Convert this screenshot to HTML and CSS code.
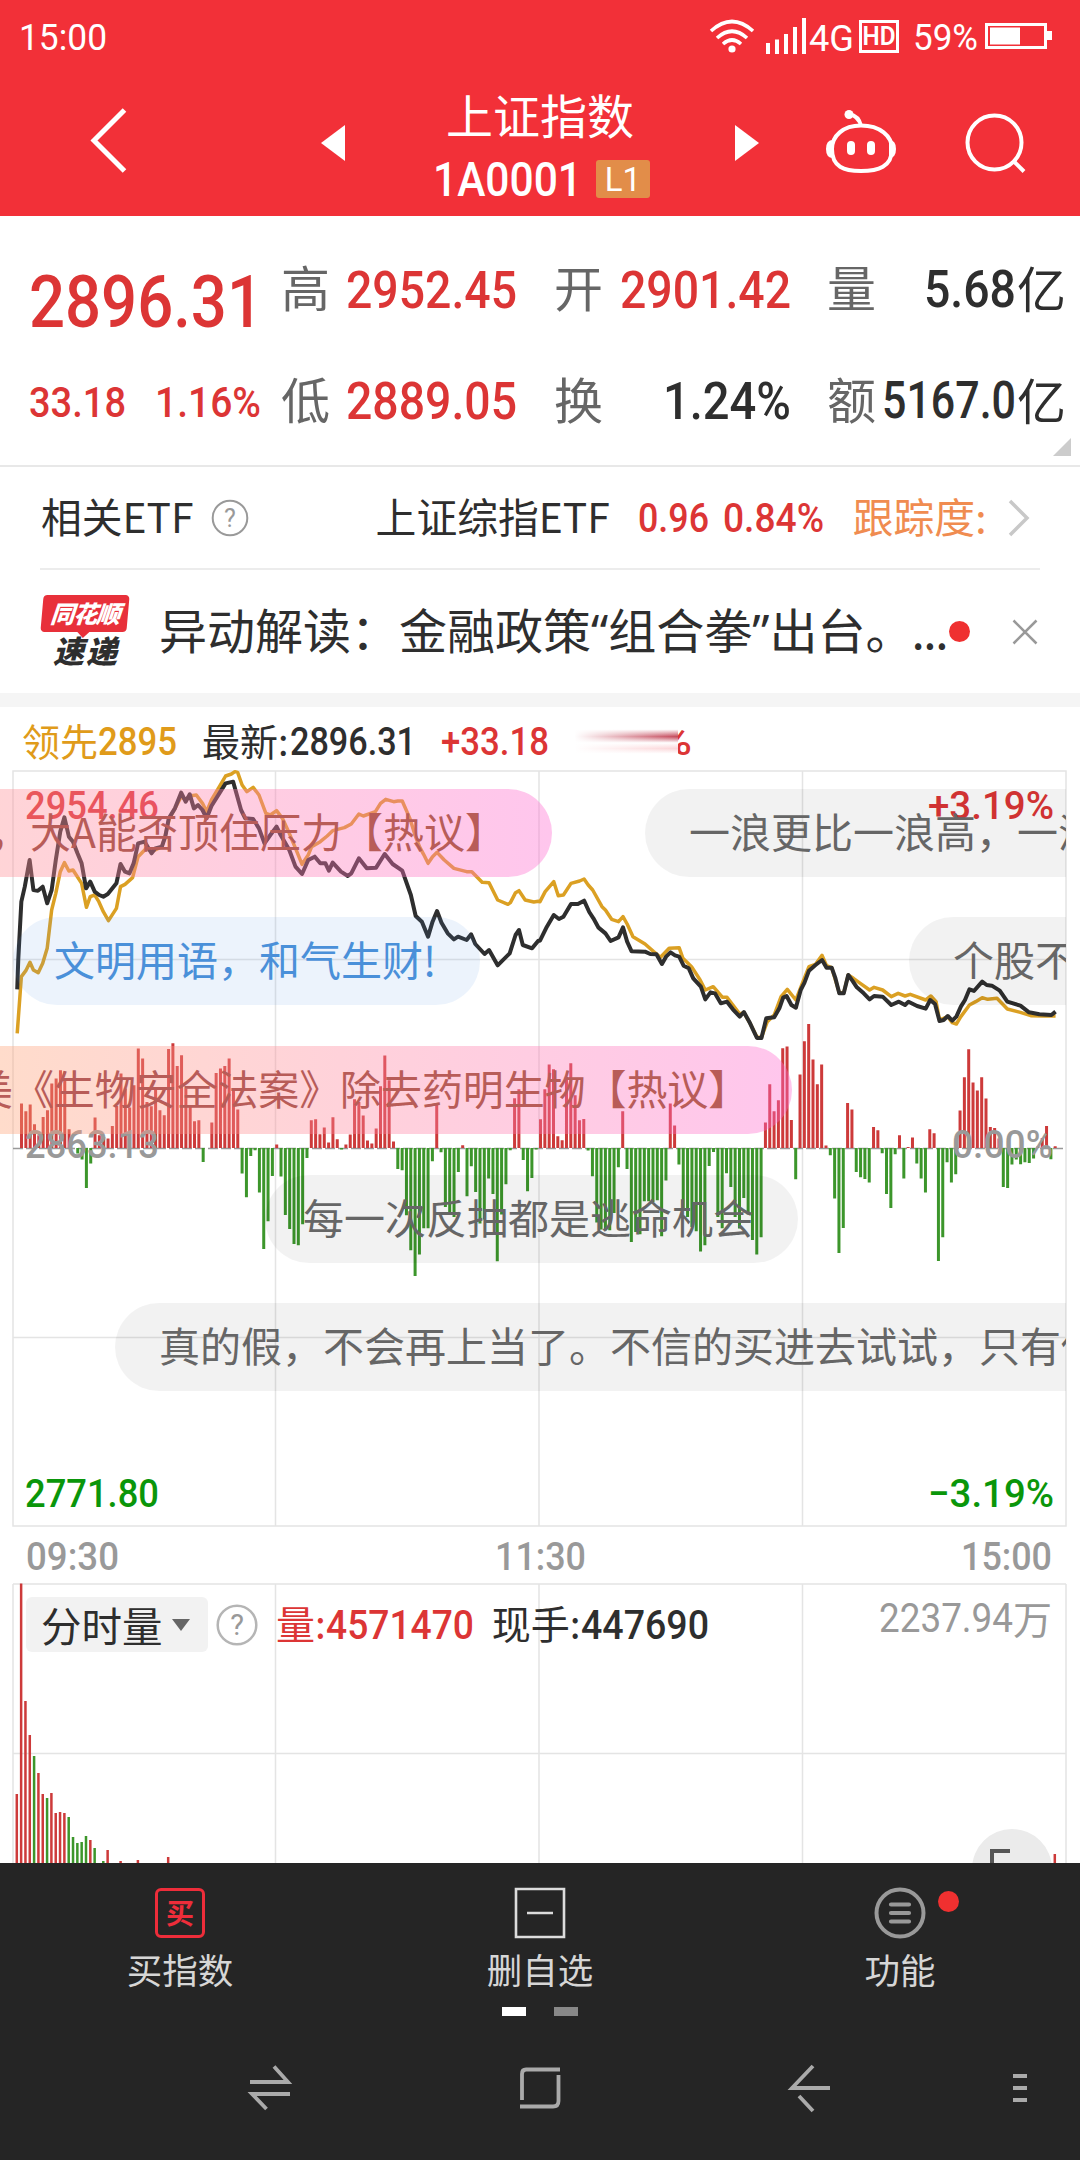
FILE: index.html
```html
<!DOCTYPE html>
<html lang="zh-CN">
<head>
<meta charset="utf-8">
<title>上证指数 1A0001</title>
<link rel="stylesheet" href="styles.css">
</head>
<body>
<header class="top">
  <div class="status">
    <svg class="n reg" width="88" height="27" style="font-size:37px"><text y="27" textLength="88" lengthAdjust="spacingAndGlyphs">15:00</text></svg>
    <svg class="status-icons" width="360" height="40" viewBox="706 14 360 40">
      <g fill="none" stroke="#fff" stroke-width="3.6">
        <path d="M711 31Q732 12 753 31M717 38Q732 24.500 747 38M723 44Q732 36 741 44"/>
      </g>
      <circle cx="732" cy="49" r="3.600" fill="#fff"/>
      <path fill="#fff" d="M766 43h4v11h-4zM775 39.500h4v14.500h-4zM784 34h4v20h-4zM793 27h4v27h-4zM802 18h4v36h-4z"/>
      <text x="809" y="51" font-size="37" font-weight="400" textLength="45" lengthAdjust="spacingAndGlyphs">4G</text>
      <rect x="860.500" y="21.500" width="37" height="30" fill="none" stroke="#fff" stroke-width="3"/>
      <text x="862.500" y="45" font-size="25" font-weight="600" textLength="33" lengthAdjust="spacingAndGlyphs">HD</text>
      <text x="913" y="50" font-size="37" textLength="65" lengthAdjust="spacingAndGlyphs">59%</text>
      <rect x="986.500" y="24.500" width="59" height="23" fill="none" stroke="#fff" stroke-width="3"/>
      <path fill="#fff" d="M990 27.500h30v17h-30zM1047 31h5v9h-5z"/>
    </svg>
  </div>
  <nav class="titlebar">
    <svg width="60" height="80" viewBox="80 100 60 80"><path d="M124.500 112L94 142.500L124.500 173" fill="none" stroke="#fff" stroke-width="5"/></svg>
    <svg width="40" height="50" viewBox="315 120 40 50"><path d="M345 126v36l-24-18z" fill="#fff"/></svg>
    <div class="title">
      <h1>上证指数</h1>
      <div class="code">
        <svg class="n" width="149" height="34" style="font-size:48.500px"><text y="34" textLength="149" lengthAdjust="spacingAndGlyphs">1A0001</text></svg>
        <span class="level">L1</span>
      </div>
    </div>
    <svg width="40" height="50" viewBox="728 120 40 50"><path d="M735 126v36l24-18z" fill="#fff"/></svg>
    <svg width="80" height="80" viewBox="821 100 80 80">
      <path d="M849 115Q859 117 861 127" fill="none" stroke="#fff" stroke-width="4"/>
      <circle cx="849" cy="115.500" r="4.500" fill="#fff"/>
      <path d="M861 126.500C880 126.500 892 137 892 150C892 168 878 172 861 172S832 168 832 150C832 137 843 126.500 861 126.500Z" fill="none" stroke="#fff" stroke-width="4"/>
      <path d="M833 141q-7 0-7 9t7 9zM889 141q7 0 7 9t-7 9z" fill="#fff"/>
      <rect x="847" y="142" width="8" height="14" rx="4" fill="#fff"/><rect x="867" y="142" width="8" height="14" rx="4" fill="#fff"/>
    </svg>
    <svg width="70" height="80" viewBox="960 100 70 80"><g fill="none" stroke="#fff" stroke-width="4"><circle cx="994.500" cy="142.500" r="27"/><path d="M1014 161.500L1024 171.500"/></g></svg>
  </nav>
</header>

<section class="quote">
  <div class="quote-row first">
    <svg class="n up big" width="234" height="52"><text y="52" textLength="234" lengthAdjust="spacingAndGlyphs">2896.31</text></svg>
    <span class="k">高</span><svg class="n up f52" width="171" height="37"><text y="37" textLength="171" lengthAdjust="spacingAndGlyphs">2952.45</text></svg>
    <span class="k">开</span><svg class="n up f52" width="171" height="37"><text y="37" textLength="171" lengthAdjust="spacingAndGlyphs">2901.42</text></svg>
    <span class="k">量</span><span class="v"><svg class="n f52" width="92" height="37"><text y="37" textLength="92" lengthAdjust="spacingAndGlyphs">5.68</text></svg>亿</span>
  </div>
  <div class="quote-row">
    <span class="chg"><svg class="n up f43" width="97" height="31"><text y="31" textLength="97" lengthAdjust="spacingAndGlyphs">33.18</text></svg><svg class="n up f43" width="106" height="31"><text y="31" textLength="106" lengthAdjust="spacingAndGlyphs">1.16%</text></svg></span>
    <span class="k">低</span><svg class="n up f52" width="171" height="37"><text y="37" textLength="171" lengthAdjust="spacingAndGlyphs">2889.05</text></svg>
    <span class="k">换</span><svg class="n f52 right" width="128" height="37"><text y="37" textLength="128" lengthAdjust="spacingAndGlyphs">1.24%</text></svg>
    <span class="k">额</span><span class="v"><svg class="n f52" width="134" height="37"><text y="37" textLength="134" lengthAdjust="spacingAndGlyphs">5167.0</text></svg>亿</span>
  </div>
  <i class="corner"></i>
</section>

<section class="etf">
  <span>相关ETF</span>
  <svg class="help" width="38" height="38"><circle cx="19" cy="19" r="17.300" fill="none" stroke="#999" stroke-width="2"/><text x="19" y="28" font-size="25" text-anchor="middle">?</text></svg>
  <span class="etf-name">上证综指ETF</span>
  <svg class="n up f41" width="71" height="29" style="margin-left:28px"><text y="29" textLength="71" lengthAdjust="spacingAndGlyphs">0.96</text></svg>
  <svg class="n up f41" width="101" height="29" style="margin-left:14px"><text y="29" textLength="101" lengthAdjust="spacingAndGlyphs">0.84%</text></svg>
  <span class="track">跟踪度:</span>
  <svg class="go" width="24" height="40"><path d="M2 3L19 20L2 37" fill="none" stroke="#c8c8c8" stroke-width="3.500"/></svg>
</section>

<section class="news">
  <div class="logo"><b class="logo-a">同花顺</b><b class="logo-b">速递</b></div>
  <p><span>异动解读：金融政策<q>“</q>组合拳<q>”</q>出台。</span><span class="dots">...</span></p>
  <i class="dot"></i>
  <svg class="close" width="26" height="26"><path d="M1.500 1.500L24.500 24.500M24.500 1.500L1.500 24.500" stroke="#999" stroke-width="2.500"/></svg>
</section>

<section class="legend">
  <span class="lead">领先</span><svg class="n lead f38" width="79" height="27"><text y="27" textLength="79" lengthAdjust="spacingAndGlyphs">2895</text></svg>
  <span class="latest">最新:</span><svg class="n f38" width="126" height="27"><text y="27" textLength="126" lengthAdjust="spacingAndGlyphs">2896.31</text></svg>
  <svg class="n up f38" width="108" height="27" style="margin-left:25px"><text y="27" textLength="108" lengthAdjust="spacingAndGlyphs">+33.18</text></svg>
  <span class="smear"><svg class="n up f38" width="33" height="27"><text y="27" textLength="33" lengthAdjust="spacingAndGlyphs">%</text></svg></span>
</section>

<section class="price">
  <svg class="chart" width="1080" height="813" viewBox="0 770 1080 813">
    <path d="M13 771H1066V1526H13ZM275.500 771V1526M539 771V1526M802.500 771V1526M13 959.500H1066M13 1337.500H1066" stroke="#e4e4e4" stroke-width="1.500" fill="none"/>
    <path d="M13 1148.500H1064" stroke="#999" stroke-width="1.500" stroke-dasharray="10 3"/>
    <path id="up" stroke="#cd3a3a" stroke-width="3"/>
    <path id="down" stroke="#3c962b" stroke-width="3"/>
    <g class="lab">
      <text x="25" y="819" textLength="134" lengthAdjust="spacingAndGlyphs" class="up">2954.46</text>
      <text x="928" y="819" textLength="126" lengthAdjust="spacingAndGlyphs" class="up">+3.19%</text>
      <text x="25" y="1158" textLength="134" lengthAdjust="spacingAndGlyphs" class="mute">2863.13</text>
      <text x="952" y="1158" textLength="101" lengthAdjust="spacingAndGlyphs" class="mute">0.00%</text>
      <text x="25" y="1507" textLength="134" lengthAdjust="spacingAndGlyphs" class="down">2771.80</text>
      <text x="928" y="1507" textLength="126" lengthAdjust="spacingAndGlyphs" class="down">−3.19%</text>
      <text x="26" y="1569.500" textLength="93" lengthAdjust="spacingAndGlyphs" class="mute">09:30</text>
      <text x="495" y="1569.500" textLength="91" lengthAdjust="spacingAndGlyphs" class="mute">11:30</text>
      <text x="961" y="1569.500" textLength="91" lengthAdjust="spacingAndGlyphs" class="mute">15:00</text>
    </g>
    <g transform="translate(0 700) scale(.34439 .33333)" fill="none" stroke-linejoin="round">
      <polyline id="avg" stroke="#dba023" stroke-width="3.500" vector-effect="non-scaling-stroke"/>
      <polyline id="idx" stroke="#2e2e2e" stroke-width="4" vector-effect="non-scaling-stroke"/>
    </g>
  </svg>
  <div class="danmaku">
    <span class="pill hot p1">，大A能否顶住压力【热议】</span>
    <span class="pill p2">一浪更比一浪高，一浪</span>
    <span class="pill blue p3">文明用语，和气生财!</span>
    <span class="pill p4">个股不看</span>
    <span class="pill hot p5">美《生物安全法案》除去药明生物【热议】</span>
    <span class="pill p6">每一次反抽都是逃命机会</span>
    <span class="pill p7">真的假，不会再上当了。不信的买进去试试，只有你</span>
  </div>
</section>

<section class="volume">
  <svg class="chart" width="1080" height="280" viewBox="0 1583 1080 280">
    <path d="M13 1584H1066M13 1584V1863M1066 1584V1863M275.500 1584V1863M539 1584V1863M802.500 1584V1863M13 1753.500H1066" stroke="#e4e4e4" stroke-width="1.500" fill="none"/>
    <path id="vup" stroke="#cd3a3a" stroke-width="2.500"/>
    <path id="vdown" stroke="#3c962b" stroke-width="2.500"/>
  </svg>
  <div class="vol-head">
    <span class="chip">分时量<i></i></span>
    <svg class="help" width="42" height="42" style="margin-left:8px"><circle cx="21" cy="21" r="19.300" fill="none" stroke="#b5b5b5" stroke-width="2.500"/><text x="21" y="31" font-size="29" text-anchor="middle">?</text></svg>
    <span class="up cjk">量:</span><svg class="n up f40" width="148" height="29"><text y="29" textLength="148" lengthAdjust="spacingAndGlyphs">4571470</text></svg>
    <span class="cjk">现手:</span><svg class="n f40" width="128" height="29"><text y="29" textLength="128" lengthAdjust="spacingAndGlyphs">447690</text></svg>
    <span class="max"><svg class="n reg f40" width="134" height="29"><text y="29" textLength="134" lengthAdjust="spacingAndGlyphs">2237.94</text></svg>万</span>
  </div>
  <div class="float"><svg width="80" height="34"><path d="M20 34V22H38" fill="none" stroke="#555" stroke-width="4"/></svg></div>
</section>

<footer>
  <div class="tabs">
    <div class="tab"><span class="buy">买</span>买指数</div>
    <div class="tab"><svg width="50" height="50"><path d="M1 1H49V49H1ZM12 25H38" fill="none" stroke="#dcdcdc" stroke-width="2.600"/></svg>删自选</div>
    <div class="tab"><svg width="50" height="50"><circle cx="25" cy="25" r="23.500" fill="none" stroke="#999" stroke-width="4"/><path d="M16 16.500H34M16 25H34M16 33.500H34" stroke="#999" stroke-width="4.200" stroke-linecap="round"/><circle cx="73.500" cy="13.500" r="10.500" fill="#f03030"/></svg>功能</div>
  </div>
  <div class="pager"><i class="on"></i><i></i></div>
  <svg class="sysnav" width="1080" height="60" viewBox="0 2058 1080 60">
    <g fill="none" stroke="#aaa" stroke-width="3.800">
      <path d="M250 2082H288L274 2066.500M290 2094H252L266.500 2109"/>
      <path d="M560 2069.500H526Q522 2069.500 522 2074V2100M520 2106.500H553Q558.500 2106.500 558.500 2101V2075"/>
      <path d="M830 2088H792L813 2066M799 2096L813 2111"/>
      <path d="M1013 2076H1027M1013 2088H1027M1013 2100H1027"/>
    </g>
  </svg>
</footer>
<script src="chart.js"></script>
</body>
</html>
```
FILE: styles.css
```css
* { box-sizing: border-box; }
body {
  margin: 0; width: 1080px; height: 2160px; overflow: hidden;
  display: flex; flex-direction: column;
  background: #fff; color: #2e2e2e;
  font-family: Roboto, "Noto Sans CJK SC", sans-serif;
}
svg { display: block; flex: none; overflow: visible; }
i { font-style: normal; display: block; flex: none; }
.n { font-family: Roboto, sans-serif; font-weight: 500; fill: #2e2e2e; }
.n.reg { font-weight: 400; }
.f38 { font-size: 38px; }
.f40 { font-size: 40px; }
.f41 { font-size: 41px; }
.f43 { font-size: 43px; }
.f52 { font-size: 52px; }
.up, .n.up { fill: #dc3535; color: #dc3535; }

.top { height: 216px; background: #f23038; color: #fff; }
.top .n, .top text { fill: #fff; }
.status { height: 54px; display: flex; justify-content: space-between; padding: 0 14px 0 19px; align-items: flex-end; }
.status .n { margin-bottom: 4px; }
.titlebar { height: 162px; display: grid; grid-template-columns: 80px 60px 175px 40px 25px 320px 28px 40px 53px 80px 59px 70px; align-items: center; padding-top: 10px; }
.titlebar > :nth-child(1) { grid-column: 2; margin-top: -4px; }
.titlebar > :nth-child(2) { grid-column: 4; margin-top: 7px; }
.titlebar > :nth-child(3) { grid-column: 6; }
.titlebar > :nth-child(4) { grid-column: 8; margin-top: 7px; }
.titlebar > :nth-child(5) { grid-column: 10; margin-top: -2px; }
.titlebar > :nth-child(6) { grid-column: 12; margin-top: -1px; }
.title { display: flex; flex-direction: column; align-items: center; padding-top: 11px; }
.title h1 { margin: 0; font: 400 47px/62px "Noto Sans CJK SC", sans-serif; }
.code { display: flex; align-items: center; gap: 14px; height: 60px; margin: 4px 0 0 3px; }
.level { width: 54px; height: 38px; border-radius: 3px; background: #e28d49; font-size: 33px; line-height: 39px; text-align: center; }

.quote { position: relative; height: 251px; border-bottom: 2px solid #e8e8e8; padding: 16px 14px 0 29px; }
.quote-row { display: grid; grid-template-columns: 252px 65px 208px 66px 207px 52px 1fr; align-items: center; height: 112px; }
.k { font: 400 49px/70px "Noto Sans CJK SC", sans-serif; color: #666; }
.quote-row .k { margin-top: -4px; }
.v { display: flex; align-items: center; justify-content: flex-end; font: 400 49px/70px "Noto Sans CJK SC", sans-serif; margin: -2px 0 0; white-space: nowrap; }
.v .n { margin-right: 1px; }
.right { margin-left: 43px; }
.first .n { margin-top: 3px; }
.first .big { margin-top: 26px; font-size: 73px; }
.chg { display: flex; gap: 29px; margin-top: 2px; }
.corner { position: absolute; right: 9px; bottom: 9px; border-left: 18px solid transparent; border-bottom: 18px solid #ccc; }

.etf { height: 103px; margin: 0 40px; border-bottom: 2px solid #ececec; display: flex; align-items: center; font: 400 40.800px/60px "Noto Sans CJK SC", sans-serif; white-space: nowrap; }
.etf span { margin-top: -4px; }
.etf span:first-child { padding-left: 1px; }
.help { margin-left: 17px; }
.help text { fill: #999; font-family: Roboto, sans-serif; }
.etf .etf-name { margin-left: 127px; }
.etf .track { color: #f08c50; margin-left: 29px; }
.go { margin-left: auto; margin-right: 8px; }

.news { height: 137px; border-bottom: 14px solid #f5f5f5; display: flex; align-items: center; padding: 0 42px 0 42px; }
.logo { width: 88px; text-align: center; font-family: "Noto Sans CJK SC", sans-serif; font-style: italic; }
.logo b { display: block; font-weight: 900; }
.logo-a { position: relative; width: 86px; height: 37px; line-height: 35px; font-size: 24px; letter-spacing: -1px; color: #fff; background: #e8303a; border-radius: 4px; transform: skewX(-5deg); }
.logo-a::after { content: ""; position: absolute; left: 36px; top: 36px; border: 7px solid transparent; border-top-color: #e8303a; border-bottom: 0; }
.logo-b { font-size: 31px; line-height: 38px; letter-spacing: 2px; margin: -1px 0 0; }
.news p { margin: -5px 0 0 29px; width: 784px; font: 400 48px/70px "Noto Sans CJK SC", sans-serif; white-space: nowrap; display: flex; }
q { quotes: none; font-family: "Noto Sans", sans-serif; }
.dots { margin-left: -2px; letter-spacing: -1.500px; }
.dot { width: 21px; height: 21px; border-radius: 50%; background: #ef3030; margin-left: 6px; }
.close { margin-left: auto; }

.legend { height: 63px; display: flex; align-items: center; padding: 5px 0 0 22px; font: 400 38px/56px "Noto Sans CJK SC", sans-serif; white-space: nowrap; }
.lead { color: #e09b1a; }
.n.lead { fill: #e09b1a; }
.latest { margin-left: 25px; margin-right: 1px; }
.legend span:not(.smear) { margin-top: -3px; }
.smear { position: relative; width: 124px; height: 27px; margin-left: 20px; padding-left: 90px; overflow: hidden; }
.smear::before { content: ""; position: absolute; left: 0; top: 0; width: 109px; height: 27px; background: linear-gradient(90deg, #fff 5%, transparent), linear-gradient(#fff 5%, #c4485a 32%, #fff 55%, #fbd5d8 76%, #fff 95%); }

.price { position: relative; height: 813px; }
.lab text { font-size: 39.500px; font-weight: 500; }
.lab .mute { fill: #999; }
.down { fill: #0a960a; }
.danmaku { position: absolute; left: 0; top: 0; width: 1066px; height: 756px; overflow: hidden; }
.pill { position: absolute; height: 88px; padding: 0 44px; border-radius: 44px; background: rgba(0,0,0,.05); color: #666; font: 400 41px/82px "Noto Sans CJK SC", sans-serif; white-space: nowrap; }
.hot { color: #b85c58; background: linear-gradient(90deg, rgba(255,168,110,.38), rgba(255,132,165,.38) 55%, rgba(255,105,208,.38)); }
.blue { color: #4a90d9; background: rgba(80,150,225,.11); }
.p1 { left: -355px; top: 19px; width: 907px; padding-left: 344px; }
.p2 { left: 645px; top: 19px; }
.p3 { left: 13px; top: 147px; width: 467px; padding-left: 41px; }
.p4 { left: 909px; top: 147px; }
.p5 { left: -71px; top: 276px; width: 863px; padding-left: 43px; letter-spacing: -.1px; }
.p6 { left: 265px; top: 405px; width: 533px; padding-left: 38px; }
.p7 { left: 115px; top: 533px; }

.volume { position: relative; height: 280px; overflow: hidden; }
.vol-head { position: absolute; left: 26px; top: 14px; right: 28px; height: 55px; display: flex; align-items: center; font: 400 39px/55px "Noto Sans CJK SC", sans-serif; white-space: nowrap; }
.cjk { margin: -4px 0 0 18px; }
.chip { width: 182px; height: 55px; border-radius: 6px; background: #f2f2f2; padding-left: 15px; font-size: 40.500px; line-height: 50px; display: flex; align-items: center; gap: 9px; }
.chip i { border: 9px solid transparent; border-top: 12px solid #666; border-bottom: 0; }
.max { margin-left: auto; display: flex; align-items: center; color: #999; margin-top: -15px; }
.max .n { fill: #999; }
.float { position: absolute; left: 972px; top: 246px; width: 80px; height: 80px; border-radius: 50%; background: #ebebeb; }

footer { height: 297px; background: #252525; display: flex; flex-direction: column; }
.tabs { display: grid; grid-template-columns: repeat(3, 1fr); padding-top: 25px; height: 144px; }
.tab { display: flex; flex-direction: column; align-items: center; gap: 5px; color: #d6d6d6; font: 400 35.500px/52px "Noto Sans CJK SC", sans-serif; }
.buy { width: 50px; height: 50px; border: 3px solid #ee2d3a; border-radius: 6px; color: #ee2d3a; font-size: 28px; font-weight: 700; line-height: 42px; text-align: center; }
.pager { display: flex; justify-content: center; gap: 28px; height: 9px; }
.pager i { width: 24px; height: 9px; background: #888; }
.pager .on { background: #fff; }
.sysnav { margin-top: 42px; }
```
FILE: chart.js
```js
// Per-minute momentum bars, in thirds of a pixel; positive is above the zero axis.
const momentum = [0,
134,111,131,72,39,94,114,194,209,234,204,57,0,-16,-34,-119,-46,92,39,34,
29,67,127,224,179,122,189,299,269,139,126,179,114,99,298,315,247,279,179,124,
81,84,-41,0,77,226,239,247,269,179,116,-76,-147,-23,-6,-133,-302,-219,-83,11,
-85,-200,-242,-287,-291,-228,-29,84,87,42,62,17,93,27,-4,11,41,147,139,98,
23,14,59,186,278,204,20,-62,-66,-201,-306,-383,-319,-240,-240,-39,134,-12,-176,-191,
-206,-71,9,-144,-54,-131,-226,-214,-91,-137,-339,-199,-108,-6,150,177,-35,-129,-89,-4,
87,177,251,237,36,24,214,255,159,84,88,-7,-84,-223,-244,-246,-246,-194,-57,111,
-62,-281,-251,-258,-159,-159,-161,-156,-264,-97,134,68,-49,-182,-206,-236,-249,-310,-291,-53,
-11,-206,-240,-75,-116,-206,-241,-149,-199,-275,-319,-267,77,192,111,144,300,305,85,-93,
221,321,373,266,192,251,8,-21,-151,-314,-239,136,116,-71,-87,-92,-103,64,54,-15,
-137,-179,-18,39,-91,4,32,-46,-91,-133,57,45,-338,-267,-42,-103,-78,113,213,297,
197,173,213,149,64,61,29,-116,-119,-49,-34,-48,-42,-44,-31,6,31,67,-33,6];
const step = 4.325, x0 = 17.2;
let up = '', down = '';
momentum.forEach((v, i) => {
  if (!v) return;
  const seg = `M${(x0 + i * step).toFixed(2)} 1148V${(1148.3 - v / 3).toFixed(1)}`;
  if (v > 0) up += seg; else down += seg;
});
document.getElementById('up').setAttribute('d', up);
document.getElementById('down').setAttribute('d', down);

// Intraday curves: the second half is offset by one half-width (1568 units).
const join = (a, b) => a + ' ' + b.split(' ').map(p => {
  const [x, y] = p.split(',');
  return (+x + 1568) + ',' + y;
}).join(' ');
document.getElementById('idx').setAttribute('points', join(
'50,868 53,780 62,605 72,560 86,480 97,570 110,572 124,560 137,610 150,570 162,480 175,395 187,352 200,410 212,425 225,460 237,490 250,565 262,545 275,575 288,585 300,590 313,582 338,550 350,492 363,515 376,520 388,490 401,430 420,425 440,460 451,445 470,440 480,410 490,355 508,325 526,278 539,305 551,283 563,325 575,315 588,330 600,355 614,318 640,275 655,250 677,245 700,330 712,355 735,357 752,385 768,430 785,405 803,380 815,405 840,450 858,500 877,522 895,480 914,470 930,490 945,490 955,512 966,488 990,515 1010,528 1020,520 1042,475 1065,505 1092,503 1117,462 1140,492 1168,512 1193,585 1207,648 1225,665 1243,710 1256,665 1269,633 1282,668 1300,700 1318,718 1330,710 1355,720 1368,703 1380,732 1407,762 1420,750 1445,796 1480,760 1497,705 1507,690 1518,735 1545,745 1563,722',
'0,722 20,680 40,645 55,657 68,650 90,612 110,612 128,602 143,636 155,655 170,683 190,700 205,723 228,712 241,682 253,725 266,754 305,755 320,762 338,763 354,792 366,770 379,757 392,766 404,770 417,797 432,805 445,835 467,860 480,898 495,877 508,880 525,910 543,905 560,928 580,950 592,936 610,970 630,1014 643,1014 657,955 680,952 695,925 706,893 716,888 730,915 743,923 757,870 768,848 781,812 800,795 819,780 832,803 847,803 857,832 869,880 882,880 895,825 907,842 920,862 940,880 957,898 970,888 995,890 1020,915 1042,905 1060,915 1070,905 1095,918 1120,926 1133,900 1147,912 1160,963 1172,960 1184,948 1197,962 1209,950 1222,920 1234,900 1247,868 1260,873 1284,845 1297,855 1312,857 1335,872 1357,905 1395,917 1420,937 1450,943 1485,945 1497,935'));
document.getElementById('avg').setAttribute('points', join(
'50,1000 62,830 75,812 87,787 97,810 111,818 124,790 137,745 150,630 162,580 175,515 187,488 200,513 212,510 237,550 251,622 262,590 275,585 287,605 300,635 315,662 338,625 350,560 363,553 385,533 401,470 425,445 440,455 470,440 480,405 492,355 508,325 526,290 540,300 551,288 570,285 588,310 600,335 614,300 640,255 655,228 672,222 682,215 690,217 703,255 717,275 735,262 752,285 772,340 785,345 803,332 820,355 840,400 862,455 877,493 895,465 905,440 930,425 950,408 966,392 1000,383 1020,372 1042,342 1055,348 1090,335 1105,310 1120,298 1143,305 1155,303 1168,303 1190,355 1205,405 1218,440 1230,463 1243,490 1256,470 1269,457 1290,480 1318,505 1355,515 1370,515 1400,547 1420,548 1445,600 1475,613 1482,608 1497,578 1507,572 1525,600 1550,606 1563,604',
'0,605 15,575 40,545 53,587 68,585 90,550 115,543 128,537 140,555 153,570 180,620 190,630 208,658 228,665 241,650 253,672 270,710 305,732 330,755 350,772 375,745 404,743 415,775 440,800 465,840 480,870 503,860 530,892 543,892 580,942 592,938 610,970 630,1012 643,1012 660,965 680,945 700,890 718,868 743,900 760,855 781,800 800,793 819,766 832,797 847,803 869,878 882,878 895,825 910,835 930,850 957,870 970,862 995,870 1020,890 1040,880 1060,888 1075,883 1120,900 1135,888 1150,905 1160,960 1184,950 1197,968 1209,972 1222,950 1247,915 1265,905 1284,893 1300,898 1327,895 1357,927 1395,937 1425,947 1460,948 1497,948'));

// Volume bars: [minute, top in px, rising?]
const volume = [[0,1794,1],[1,1583.5,1],[2,1701,1],[3,1735,1],[4,1756,0],[5,1773,1],[6,1794,1],[7,1798,0],[8,1793,1],[9,1813,1],[10,1812,1],[11,1813,1],[12,1817,0],[13,1837,0],[14,1843,0],[15,1842,0],[16,1836,0],[17,1840,1],[18,1848,0],[20,1861,0],[21,1850,1],[24,1861,1],[28,1860,1],[35,1857,1],[240,1854,1]];
let vu = '', vd = '';
for (const [i, y, r] of volume) {
  const seg = `M${(16.8 + i * step).toFixed(2)} 1863V${y}`;
  if (r) vu += seg; else vd += seg;
}
document.getElementById('vup').setAttribute('d', vu);
document.getElementById('vdown').setAttribute('d', vd);
```
